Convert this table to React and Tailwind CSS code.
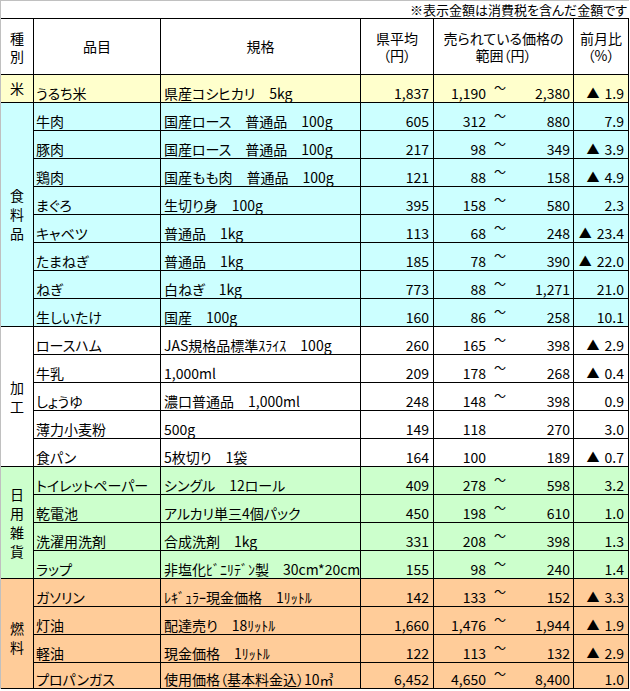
import React from "react";

const groups = [
  {
    cat: ["米"],
    bg: "bg-[#ffffcc]",
    off: "",
    rows: [["うるち米", "県産コシヒカリ　5kg", "1,837", "1,190", "2,380", true, "1.9", true]],
  },
  {
    cat: ["食", "料", "品"],
    bg: "bg-[#ccffff]",
    off: "",
    rows: [
      ["牛肉", "国産ロース　普通品　100g", "605", "312", "880", false, "7.9", true],
      ["豚肉", "国産ロース　普通品　100g", "217", "98", "349", true, "3.9", true],
      ["鶏肉", "国産もも肉　普通品　100g", "121", "88", "158", true, "4.9", true],
      ["まぐろ", "生切り身　100g", "395", "158", "580", false, "2.3", true],
      ["キャベツ", "普通品　1kg", "113", "68", "248", true, "23.4", true],
      ["たまねぎ", "普通品　1kg", "185", "78", "390", true, "22.0", true],
      ["ねぎ", "白ねぎ　1kg", "773", "88", "1,271", false, "21.0", true],
      ["生しいたけ", "国産　100g", "160", "86", "258", false, "10.1", true],
    ],
  },
  {
    cat: ["加", "工"],
    bg: "bg-white",
    off: "",
    rows: [
      ["ロースハム", "JAS規格品標準ｽﾗｲｽ　100g", "260", "165", "398", true, "2.9", true],
      ["牛乳", "1,000ml", "209", "178", "268", true, "0.4", true],
      ["しょうゆ", "濃口普通品　1,000ml", "248", "148", "398", false, "0.9", true],
      ["薄力小麦粉", "500g", "149", "118", "270", false, "3.0", false],
      ["食パン", "5枚切り　1袋", "164", "100", "189", true, "0.7", false],
    ],
  },
  {
    cat: ["日", "用", "雑", "貨"],
    bg: "bg-[#ccffcc]",
    off: "",
    rows: [
      ["トイレットペーパー", "シングル　12ロール", "409", "278", "598", false, "3.2", true],
      ["乾電池", "アルカリ単三4個パック", "450", "198", "610", false, "1.0", true],
      ["洗濯用洗剤", "合成洗剤　1kg", "331", "208", "398", false, "1.3", true],
      ["ラップ", "非塩化ﾋﾞﾆﾘﾃﾞﾝ製　30cm*20cm", "155", "98", "240", false, "1.4", true],
    ],
  },
  {
    cat: ["燃", "料"],
    bg: "bg-[#ffcc99]",
    off: "pt-[8px]",
    rows: [
      ["ガソリン", "ﾚｷﾞｭﾗｰ現金価格　1ﾘｯﾄﾙ", "142", "133", "152", true, "3.3", true],
      ["灯油", "配達売り　18ﾘｯﾄﾙ", "1,660", "1,476", "1,944", true, "1.9", true],
      ["軽油", "現金価格　1ﾘｯﾄﾙ", "122", "113", "132", true, "2.9", true],
      ["プロパンガス", "使用価格（基本料金込）10㎥", "6,452", "4,650", "8,400", false, "1.0", true],
    ],
  },
];

const cell = "border-r border-b border-black flex items-end pb-[1px] leading-[16px] whitespace-nowrap overflow-hidden";

export default function App() {
  return (
    <div className="w-[630px] h-[691px] bg-white overflow-hidden text-black text-[14px] font-['Noto_Sans_CJK_JP',sans-serif] [font-feature-settings:'palt']">
      <div className="w-[629px] border-l border-t border-[#c0c0c0]">
        <div className="h-[17px] flex items-end justify-end pr-[2px] text-[13px] leading-[16px]">
          ※表示金額は消費税を含んだ金額です
        </div>
        <div className="grid border-t border-black grid-cols-[33px_127px_200px_73px_140px_55px] grid-rows-[56px_repeat(21,28px)_26px]">
          <div className="border-r border-b border-black flex flex-col items-center justify-center">
            <span className="block h-[18px] leading-[18px]">種</span>
            <span className="block h-[18px] leading-[18px]">別</span>
          </div>
          <div className="border-r border-b border-black flex items-center justify-center">品目</div>
          <div className="border-r border-b border-black flex items-center justify-center">規格</div>
          <div className="border-r border-b border-black flex flex-col items-center justify-center">
            <span className="block h-[17px] leading-[17px]">県平均</span>
            <span className="block h-[17px] leading-[17px]">（円）</span>
          </div>
          <div className="border-r border-b border-black flex flex-col items-center justify-center">
            <span className="block h-[17px] leading-[17px]">売られている価格の</span>
            <span className="block h-[17px] leading-[17px]">範囲（円）</span>
          </div>
          <div className="border-r border-b border-black flex flex-col items-center justify-center">
            <span className="block h-[17px] leading-[17px]">前月比</span>
            <span className="block h-[17px] leading-[17px]">（%）</span>
          </div>
          {groups.map((g, gi) => (
            <React.Fragment key={gi}>
              {g.rows.map((r, ri) => (
                <React.Fragment key={ri}>
                  {ri === 0 && (
                    <div
                      className={`${g.bg} ${g.off} border-r border-b border-black flex flex-col items-center justify-center`}
                      style={{ gridRow: `span ${g.rows.length} / span ${g.rows.length}` }}
                    >
                      {g.cat.map((c, ci) => (
                        <span key={ci} className="block h-[19px] leading-[19px]">
                          {c}
                        </span>
                      ))}
                    </div>
                  )}
                  <div className={`${g.bg} ${cell} pl-[2px]`}>{r[0]}</div>
                  <div className={`${g.bg} ${cell} pl-[3px]`}>{r[1]}</div>
                  <div className={`${g.bg} ${cell} justify-end pr-[4px]`}>{r[2]}</div>
                  <div className={`${g.bg} ${cell}`}>
                    <span className="w-[52px] text-right">{r[3]}</span>
                    <span className="w-[22px] self-end mb-[8px] pl-[8px] text-[12px] leading-[10px]">
                      {r[7] ? "〜" : ""}
                    </span>
                    <span className="flex-1 text-right pr-[3px]">{r[4]}</span>
                  </div>
                  <div className={`${g.bg} ${cell} justify-end pr-[4px]`}>
                    {r[5] && <span className="text-[13px] mr-[5px]">▲</span>}
                    <span>{r[6]}</span>
                  </div>
                </React.Fragment>
              ))}
            </React.Fragment>
          ))}
        </div>
      </div>
    </div>
  );
}
